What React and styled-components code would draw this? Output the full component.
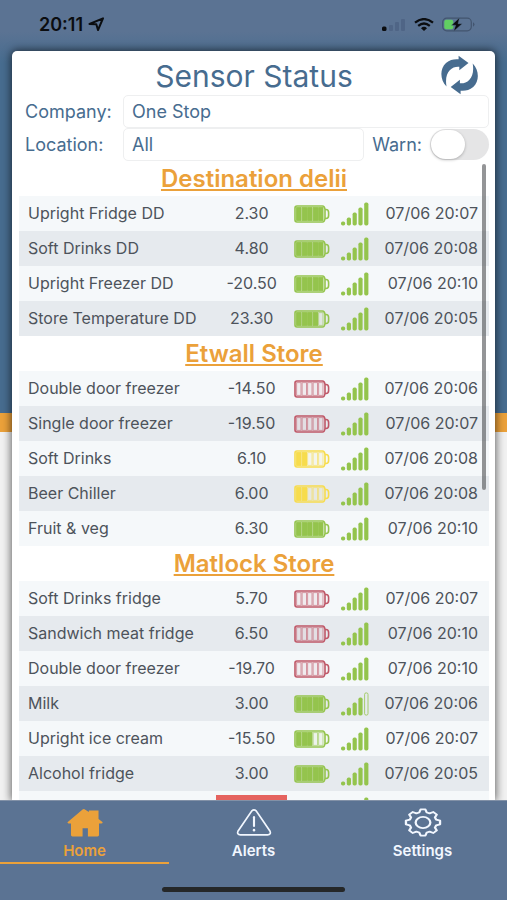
import React from "react";
import styled, { createGlobalStyle, css } from "styled-components";

const BLUE = "#476c8f";
const BAR = "#5b7393";
const ORANGE = "#eba13a";
const GREEN = "#94c44d";
const RED = "#bf5767";
const YELLOW = "#f7dc4c";

const GlobalStyle = createGlobalStyle`
  * { box-sizing: border-box; }
  body { margin: 0; font-family: Inter, "Liberation Sans", sans-serif; }
  button, select, input { font: inherit; color: inherit; margin: 0; }
`;

const Screen = styled.div`
  display: flex;
  flex-direction: column;
  height: 100vh;
  color: ${BLUE};
  background: linear-gradient(
    ${BAR} 0,
    ${BAR} 3.5%,
    ${BLUE} 7%,
    ${BLUE} 45.9%,
    ${ORANGE} 45.9%,
    ${ORANGE} 48%,
    #f1f1f1 48%
  );
`;

const StatusBar = styled.header`
  display: flex;
  justify-content: space-between;
  align-items: center;
  flex: none;
  height: 51px;
  padding: 0 32px 2px 39px;
  color: #0b0d10;
`;

const Clock = styled.div`
  display: flex;
  align-items: center;
  gap: 5px;
  font-size: 18px;
  font-weight: 600;
`;

const Indicators = styled.div`
  display: flex;
  align-items: center;
  gap: 8px;
`;

const Card = styled.main`
  display: flex;
  flex-direction: column;
  flex: 1;
  min-height: 0;
  margin: 0 12px;
  padding: 0 6px 0 7px;
  border-radius: 5px 5px 0 0;
  background: #fff;
  box-shadow: 0 0 9px 1px rgba(0, 0, 0, 0.6);
`;

const TitleRow = styled.div`
  position: relative;
  flex: none;
  height: 44px;
`;

const Title = styled.h1`
  margin: 0;
  font-size: 30px;
  line-height: 50px;
  font-weight: 400;
  text-align: center;
`;

const RefreshButton = styled.button`
  position: absolute;
  top: 4px;
  right: 10px;
  padding: 0;
  border: 0;
  background: none;
  svg { display: block; }
`;

const FormRow = styled.div`
  display: flex;
  align-items: center;
  flex: none;
  height: 33px;
  padding-left: 6px;
  font-size: 18px;
`;

const FieldLabel = styled.label`
  flex: none;
  width: 98px;
`;

const Select = styled.select`
  appearance: none;
  flex: 1;
  min-width: 0;
  height: 33px;
  padding: 0 8px;
  border: 1px solid #eeeff0;
  border-radius: 5px;
  background: #fff;
`;

const WarnLabel = styled.label`
  display: flex;
  align-items: center;
  gap: 8px;
  margin-left: 8px;
`;

const Toggle = styled.input`
  appearance: none;
  display: flex;
  width: 59px;
  height: 31px;
  padding: 1px;
  border-radius: 16px;
  background: #e5e5e6;
  &::before {
    content: "";
    width: 34px;
    border-radius: 17px;
    background: #fff;
    box-shadow: 0 1px 3px rgba(0, 0, 0, 0.25);
  }
  &:checked { justify-content: flex-end; background: ${GREEN}; }
`;

const ListFrame = styled.div`
  position: relative;
  flex: 1;
  min-height: 0;
`;

const List = styled.div`
  height: 100%;
  overflow-y: auto;
  scrollbar-width: none;
`;

const ScrollThumb = styled.div`
  position: absolute;
  top: 3px;
  right: 3px;
  width: 4px;
  height: 51%;
  border-radius: 2px;
  background: rgba(90, 92, 96, 0.65);
`;

const StoreName = styled.h2`
  margin: 0;
  font-size: 24px;
  line-height: 35px;
  font-weight: 600;
  text-align: center;
`;

const StoreLink = styled.a`
  color: ${ORANGE};
  text-decoration: underline;
  text-decoration-thickness: 2px;
  text-underline-offset: 2px;
  text-decoration-skip-ink: none;
`;

const Table = styled.table`
  width: 100%;
  border-collapse: collapse;
  table-layout: fixed;
  color: #4d535b;
  font-size: 16px;
`;

const Row = styled.tr`
  height: 35px;
  background: #f5f8fa;
  &:nth-child(even) { background: #e6eaee; }
`;

const Cell = styled.td`
  padding: 0;
  line-height: 27px;
  white-space: nowrap;
  text-align: ${(p) => p.$align || "left"};
  svg { display: block; }
  ${(p) => p.$name && css`padding-left: 9px;`}
  ${(p) => p.$icon && css`padding-left: 7px;`}
  ${(p) => p.$time && css`padding-right: 11px;`}
`;

const Reading = styled.div`
  min-height: 27px;
  background: ${(p) => (p.$alarm ? "#e5635f" : "transparent")};
`;

const TabBar = styled.nav`
  position: relative;
  display: flex;
  flex: none;
  height: 100px;
  background: ${BAR};
  border-top: 1px solid #8291a7;
`;

const Tab = styled.button`
  display: flex;
  flex-direction: column;
  align-items: center;
  flex: 1;
  height: 63px;
  padding: 7px 0 0;
  border: 0;
  border-bottom: 2px solid ${(p) => (p.$active ? ORANGE : "transparent")};
  background: none;
  color: ${(p) => (p.$active ? ORANGE : "#f2f7ff")};
  font-size: 15px;
  line-height: 22px;
  font-weight: 600;
  svg { display: block; width: 38px; height: 30px; margin-bottom: 3px; }
`;

const HomeIndicator = styled.div`
  position: absolute;
  bottom: 8px;
  left: 32%;
  right: 32%;
  height: 5px;
  border-radius: 3px;
  background: #252728;
`;

function LocationArrow() {
  return (
    <svg width="17" height="15" viewBox="0 0 17 15" aria-hidden="true">
      <path d="M1.500 7 15 1.300 10 13 8.300 7.300Z" fill="none" stroke="currentColor" strokeWidth="2" strokeLinejoin="round" />
    </svg>
  );
}

function CellSignal() {
  return (
    <svg width="24" height="12" viewBox="0 0 24 12" aria-hidden="true">
      <rect x="0" y="7.500" width="4.500" height="4.500" rx="1.500" fill="#0b0d10" />
      <g fill="#44597a" opacity=".5">
        <rect x="7" y="6" width="4" height="6" rx="1" />
        <rect x="13" y="3" width="4" height="9" rx="1" />
        <rect x="19" y="0" width="4" height="12" rx="1" />
      </g>
    </svg>
  );
}

function Wifi() {
  return (
    <svg width="20" height="13" viewBox="0 0 20 13" aria-hidden="true">
      <g fill="none" stroke="currentColor" strokeWidth="2.3">
        <path d="M1 4.6Q10-2.4 19 4.6" />
        <path d="M4.2 7.8Q10 3.2 15.8 7.8" />
      </g>
      <path d="M7 10.2Q10 7.5 13 10.2L10 13Z" fill="currentColor" />
    </svg>
  );
}

function PhoneBattery() {
  return (
    <svg width="33" height="15" viewBox="0 0 33 15" aria-hidden="true">
      <rect x=".7" y="1.2" width="28.6" height="12.6" rx="4" fill="none" stroke="#43556f" strokeWidth="1.2" />
      <path d="M31 5.3q3 2.2 0 4.4Z" fill="#43556f" />
      <rect x="2.3" y="2.8" width="9" height="9.4" rx="2" fill="#61cf62" />
      <path d="M17.5.8 9.5 8.2h4.2l-2 6 8.5-7.5H16Z" fill="currentColor" stroke={BAR} strokeWidth=".4" />
    </svg>
  );
}

const REFRESH_ARROW =
  "M5.500 31.500C-1 25-1.500 14 5 8 9 4.500 13 4 17.600 4.300V.7L27.500 8 18.300 15.300V11.800C11 11 3 17 5.500 31.500Z";

function RefreshIcon() {
  return (
    <svg width="38" height="40" viewBox="0 0 38 40" aria-hidden="true" fill={BLUE}>
      <path d={REFRESH_ARROW} />
      <path d={REFRESH_ARROW} transform="rotate(180 18.600 20)" />
    </svg>
  );
}

function BatteryIcon({ level, color }) {
  return (
    <svg width="36" height="18" viewBox="0 0 36 18" role="img" aria-label={`Battery ${level} of 5`}>
      <g fill="none" stroke={color} strokeWidth="1.600">
        <path d="M3 1H28.500Q30.500 1 31 4.500V13.500Q30.500 17 28.500 17H3Q1 17 1 15V3Q1 1 3 1Z" />
        <path d="M31 4.500H32Q34.600 4.500 34.600 7.500V10.500Q34.600 13.500 32 13.500H31" />
      </g>
      {[0, 1, 2, 3, 4].map((i) => (
        <rect
          key={i}
          x={2.6 + i * 5.5}
          y="2.600"
          width="4.400"
          height="12.800"
          fill={color}
          fillOpacity={i < level ? 1 : 0.08}
          stroke={color}
          strokeWidth="1"
          strokeOpacity={i < level ? 1 : 0.6}
        />
      ))}
    </svg>
  );
}

function SignalIcon({ level }) {
  return (
    <svg width="28" height="24" viewBox="0 0 28 24" role="img" aria-label={`Signal ${level} of 5`}>
      {[4, 8, 13, 18, 23].map((h, i) =>
        i < level ? (
          <rect key={h} x={i * 5.8} y={23.5 - h} width="4.200" height={h} rx="1.700" fill={GREEN} />
        ) : (
          <rect key={h} x={i * 5.8 + 0.4} y={23.9 - h} width="3.400" height={h - 0.8} rx="1.500" fill="none" stroke={GREEN} strokeWidth=".8" />
        )
      )}
    </svg>
  );
}

function HomeIcon() {
  return (
    <svg width="38" height="30" viewBox="0 0 38 30" aria-hidden="true">
      <path
        d="M18.500 1.200 23 4.200V2.500H33V11.500L37 14.500Q38 16 36 16H33.500V28Q33.500 29.500 32 29.500H22V21H16.500V29.500H6Q4.500 29.500 4.500 28V16H2Q0 15.500 1.200 14.500L16.500 1.600Q17.500.6 18.500 1.200Z"
        fill="currentColor"
      />
    </svg>
  );
}

function AlertIcon() {
  return (
    <svg width="38" height="30" viewBox="0 0 38 30" aria-hidden="true" fill="none" stroke="currentColor" strokeWidth="1.700" strokeLinecap="round">
      <path d="M16.800 2.900Q19 .8 21.200 2.900L35.600 24Q37 27.500 33 27.800H5Q1 27.500 2.400 24Z" />
      <path d="M19 9.500V18.500" strokeWidth="2.200" />
      <path d="M19 22.800V23" strokeWidth="2.600" />
    </svg>
  );
}

const GEAR_OUTLINE = Array.from({ length: 8 }, (_, tooth) =>
  [[-16, 10.8], [-8, 13.6], [8, 13.6], [16, 10.8]].map(([offset, radius]) => {
    const angle = ((tooth * 45 + offset) * Math.PI) / 180;
    return `${15 + radius * Math.cos(angle)},${15 + radius * Math.sin(angle)}`;
  })
)
  .flat()
  .join(" ");

function GearIcon() {
  return (
    <svg viewBox="0 0 30 30" preserveAspectRatio="none" aria-hidden="true" fill="none" stroke="currentColor" strokeWidth="1.800" strokeLinejoin="round">
      <polygon points={GEAR_OUTLINE} />
      <circle cx="15" cy="15" r="5.800" />
    </svg>
  );
}

const stores = [
  {
    name: "Destination delii",
    sensors: [
      ["Upright Fridge DD", "2.30", 5, GREEN, 5, "07/06 20:07"],
      ["Soft Drinks DD", "4.80", 5, GREEN, 5, "07/06 20:08"],
      ["Upright Freezer DD", "-20.50", 5, GREEN, 5, "07/06 20:10"],
      ["Store Temperature DD", "23.30", 4, GREEN, 5, "07/06 20:05"],
    ],
  },
  {
    name: "Etwall Store",
    sensors: [
      ["Double door freezer", "-14.50", 0, RED, 5, "07/06 20:06"],
      ["Single door freezer", "-19.50", 0, RED, 5, "07/06 20:07"],
      ["Soft Drinks", "6.10", 2, YELLOW, 5, "07/06 20:08"],
      ["Beer Chiller", "6.00", 2, YELLOW, 5, "07/06 20:08"],
      ["Fruit & veg", "6.30", 5, GREEN, 5, "07/06 20:10"],
    ],
  },
  {
    name: "Matlock Store",
    sensors: [
      ["Soft Drinks fridge", "5.70", 0, RED, 5, "07/06 20:07"],
      ["Sandwich meat fridge", "6.50", 0, RED, 5, "07/06 20:10"],
      ["Double door freezer", "-19.70", 0, RED, 5, "07/06 20:10"],
      ["Milk", "3.00", 5, GREEN, 4, "07/06 20:06"],
      ["Upright ice cream", "-15.50", 3, GREEN, 5, "07/06 20:07"],
      ["Alcohol fridge", "3.00", 5, GREEN, 5, "07/06 20:05"],
      ["", "", 5, GREEN, 5, "", true],
    ],
  },
];

function SensorTable({ sensors, label }) {
  return (
    <Table aria-label={label}>
      <colgroup>
        <col width="42%" />
        <col width="15%" />
        <col width="10%" />
        <col width="9%" />
        <col width="24%" />
      </colgroup>
      <tbody>
        {sensors.map(([name, value, battery, color, signal, time, alarm], i) => (
          <Row key={i}>
            <Cell $name>{name}</Cell>
            <Cell $align="center"><Reading $alarm={alarm}>{value}</Reading></Cell>
            <Cell $icon><BatteryIcon level={battery} color={color} /></Cell>
            <Cell $icon><SignalIcon level={signal} /></Cell>
            <Cell $align="right" $time>{time}</Cell>
          </Row>
        ))}
      </tbody>
    </Table>
  );
}

export default function App() {
  return (
    <>
      <GlobalStyle />
      <Screen>
        <StatusBar>
          <Clock>20:11 <LocationArrow /></Clock>
          <Indicators><CellSignal /><Wifi /><PhoneBattery /></Indicators>
        </StatusBar>
        <Card>
          <TitleRow>
            <Title>Sensor Status</Title>
            <RefreshButton aria-label="Refresh"><RefreshIcon /></RefreshButton>
          </TitleRow>
          <FormRow>
            <FieldLabel htmlFor="company">Company:</FieldLabel>
            <Select id="company"><option>One Stop</option></Select>
          </FormRow>
          <FormRow>
            <FieldLabel htmlFor="location">Location:</FieldLabel>
            <Select id="location"><option>All</option></Select>
            <WarnLabel>Warn:<Toggle type="checkbox" role="switch" /></WarnLabel>
          </FormRow>
          <ListFrame>
            <List>
              {stores.map((s) => (
                <section key={s.name}>
                  <StoreName><StoreLink href="#">{s.name}</StoreLink></StoreName>
                  <SensorTable sensors={s.sensors} label={s.name} />
                </section>
              ))}
            </List>
            <ScrollThumb />
          </ListFrame>
        </Card>
        <TabBar>
          <Tab $active><HomeIcon />Home</Tab>
          <Tab><AlertIcon />Alerts</Tab>
          <Tab><GearIcon />Settings</Tab>
          <HomeIndicator />
        </TabBar>
      </Screen>
    </>
  );
}
